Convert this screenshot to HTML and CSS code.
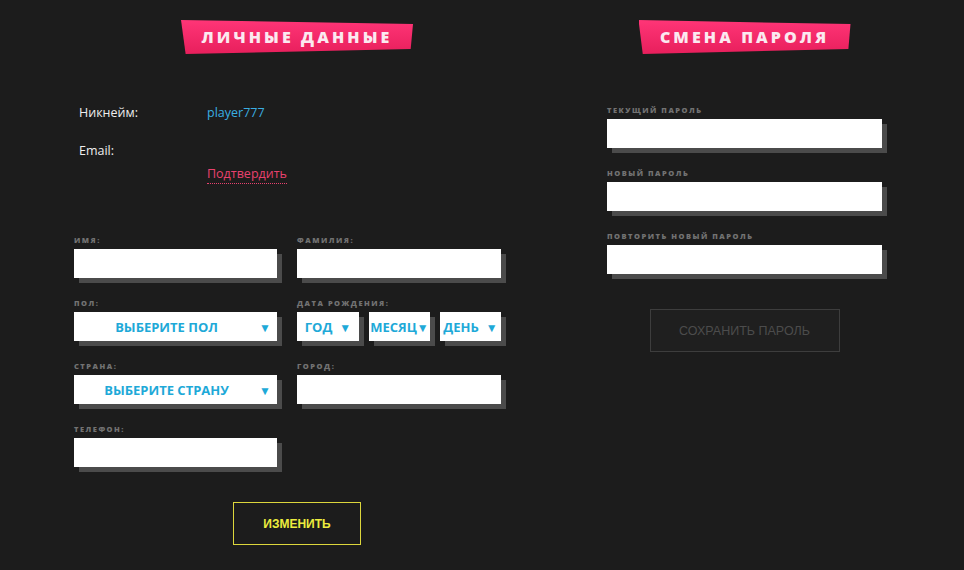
FILE: index.html
```html
<!DOCTYPE html>
<html>
    <head>
        <meta charset="utf-8">
        <title>Профиль</title>
        <link rel="stylesheet" href="styles.css">
    </head>
    <body>
        <div class="page">
            <div class="colLeft">
                <h2 class="title titleLeft">Личные данные</h2>
                <div class="info">
                    <span class="infoLabel first">Никнейм:</span>
                    <span class="nick">player777</span>
                    <span class="infoLabel">Email:</span>
                    <span></span>
                    <span></span>
                    <span><a class="confirm">Подтвердить</a></span>
                </div>
                <div class="formGrid">
                    <div class="field">
                        <label>Имя:</label>
                        <input type="text">
                    </div>
                    <div class="field">
                        <label>Фамилия:</label>
                        <input type="text">
                    </div>
                    <div class="field">
                        <label>Пол:</label>
                        <div class="select"><span class="selText">Выберите пол</span><span class="arrow">&#9660;</span></div>
                    </div>
                    <div class="field">
                        <label>Дата рождения:</label>
                        <div class="dateRow">
                            <div class="select small"><span>Год</span><span class="arrow">&#9660;</span></div>
                            <div class="select small tight"><span>Месяц</span><span class="arrow">&#9660;</span></div>
                            <div class="select small"><span>День</span><span class="arrow">&#9660;</span></div>
                        </div>
                    </div>
                    <div class="field">
                        <label>Страна:</label>
                        <div class="select"><span class="selText">Выберите страну</span><span class="arrow">&#9660;</span></div>
                    </div>
                    <div class="field">
                        <label>Город:</label>
                        <input type="text">
                    </div>
                    <div class="field">
                        <label>Телефон:</label>
                        <input type="text">
                    </div>
                </div>
                <div class="btnWrap">
                    <button class="editBtn">Изменить</button>
                </div>
            </div>
            <div class="colRight">
                <h2 class="title titleRight">Смена пароля</h2>
                <div class="passFields">
                    <div class="field">
                        <label>Текущий пароль</label>
                        <input type="password">
                    </div>
                    <div class="field">
                        <label>Новый пароль</label>
                        <input type="password">
                    </div>
                    <div class="field">
                        <label>Повторить новый пароль</label>
                        <input type="password">
                    </div>
                </div>
                <div class="btnWrap">
                    <button class="saveBtn">Сохранить пароль</button>
                </div>
            </div>
        </div>
    </body>
</html>
```

FILE: styles.css
```css
body {
    margin: 0;
    background: #1c1c1c;
    color: #eee;
    font-family: "Open Sans", sans-serif;
}
.page {
    display: flex;
    padding-top: 20px;
}
.colLeft {
    margin-left: 74px;
    width: 446px;
}
.colRight {
    margin-left: 87px;
    width: 275px;
}
.title {
    margin: 0 auto;
    height: 34px;
    line-height: 34px;
    font-size: 16px;
    font-weight: 800;
    letter-spacing: 3.1px;
    text-transform: uppercase;
    color: #fbe9f0;
    text-align: center;
    background: linear-gradient(#ff3577, #e81f5c);
    clip-path: polygon(0 0, 100% 12%, 99% 85%, 2% 100%);
}
.titleLeft {
    width: 232px;
}
.titleRight {
    width: 212px;
}
.info {
    display: grid;
    grid-template-columns: 128px auto;
    row-gap: 5px;
    margin-top: 50px;
    margin-left: 5px;
    font-size: 12.5px;
    line-height: 18px;
}
.info .first {
    margin-bottom: 15px;
}
.nick {
    color: #3aaee2;
}
.confirm {
    color: #e8416e;
    border-bottom: 1px dotted #e8416e;
    padding-bottom: 1px;
}
.formGrid {
    display: grid;
    grid-template-columns: 203px 204px;
    column-gap: 20px;
    row-gap: 20px;
    margin-top: 52px;
}
.field label {
    display: block;
    height: 10px;
    line-height: 10px;
    margin-bottom: 4px;
    font-size: 7.5px;
    font-weight: 800;
    letter-spacing: 1.5px;
    text-transform: uppercase;
    color: #727272;
}
.field input {
    display: block;
    box-sizing: border-box;
    width: 100%;
    height: 29px;
    border: none;
    margin: 0;
    background: #fff;
    box-shadow: 5px 5px 0 #4b4b4b;
    outline: none;
}
.select {
    display: flex;
    align-items: center;
    height: 29px;
    background: #fff;
    box-shadow: 5px 5px 0 #4b4b4b;
    color: #1ea9d8;
    font-size: 13px;
    font-weight: 700;
    text-transform: uppercase;
}
.selText {
    flex: 1;
    text-align: center;
}
.arrow {
    font-size: 12px;
    margin-right: 6px;
    margin-top: 2px;
}
.dateRow {
    display: grid;
    grid-template-columns: 62px 61px 61px;
    column-gap: 10px;
}
.select.small {
    justify-content: center;
    gap: 7px;
}
.select.small .arrow {
    margin-right: 0;
}
.select.tight {
    gap: 0;
}
.btnWrap {
    display: flex;
    justify-content: center;
    margin-top: 35px;
}
.editBtn {
    width: 128px;
    height: 43px;
    background: transparent;
    border: 1px solid #dcd63c;
    color: #ecec3e;
    font-family: "Liberation Sans", Arial, sans-serif;
    font-size: 12px;
    font-weight: bold;
    text-transform: uppercase;
}
.passFields {
    display: flex;
    flex-direction: column;
    gap: 20px;
    margin-top: 51px;
}
.saveBtn {
    width: 190px;
    height: 43px;
    background: #1f1f1f;
    border: 1px solid #3d3d3d;
    color: #4c4c4c;
    font-family: "Liberation Sans", Arial, sans-serif;
    font-size: 12.5px;
    text-transform: uppercase;
}
```
